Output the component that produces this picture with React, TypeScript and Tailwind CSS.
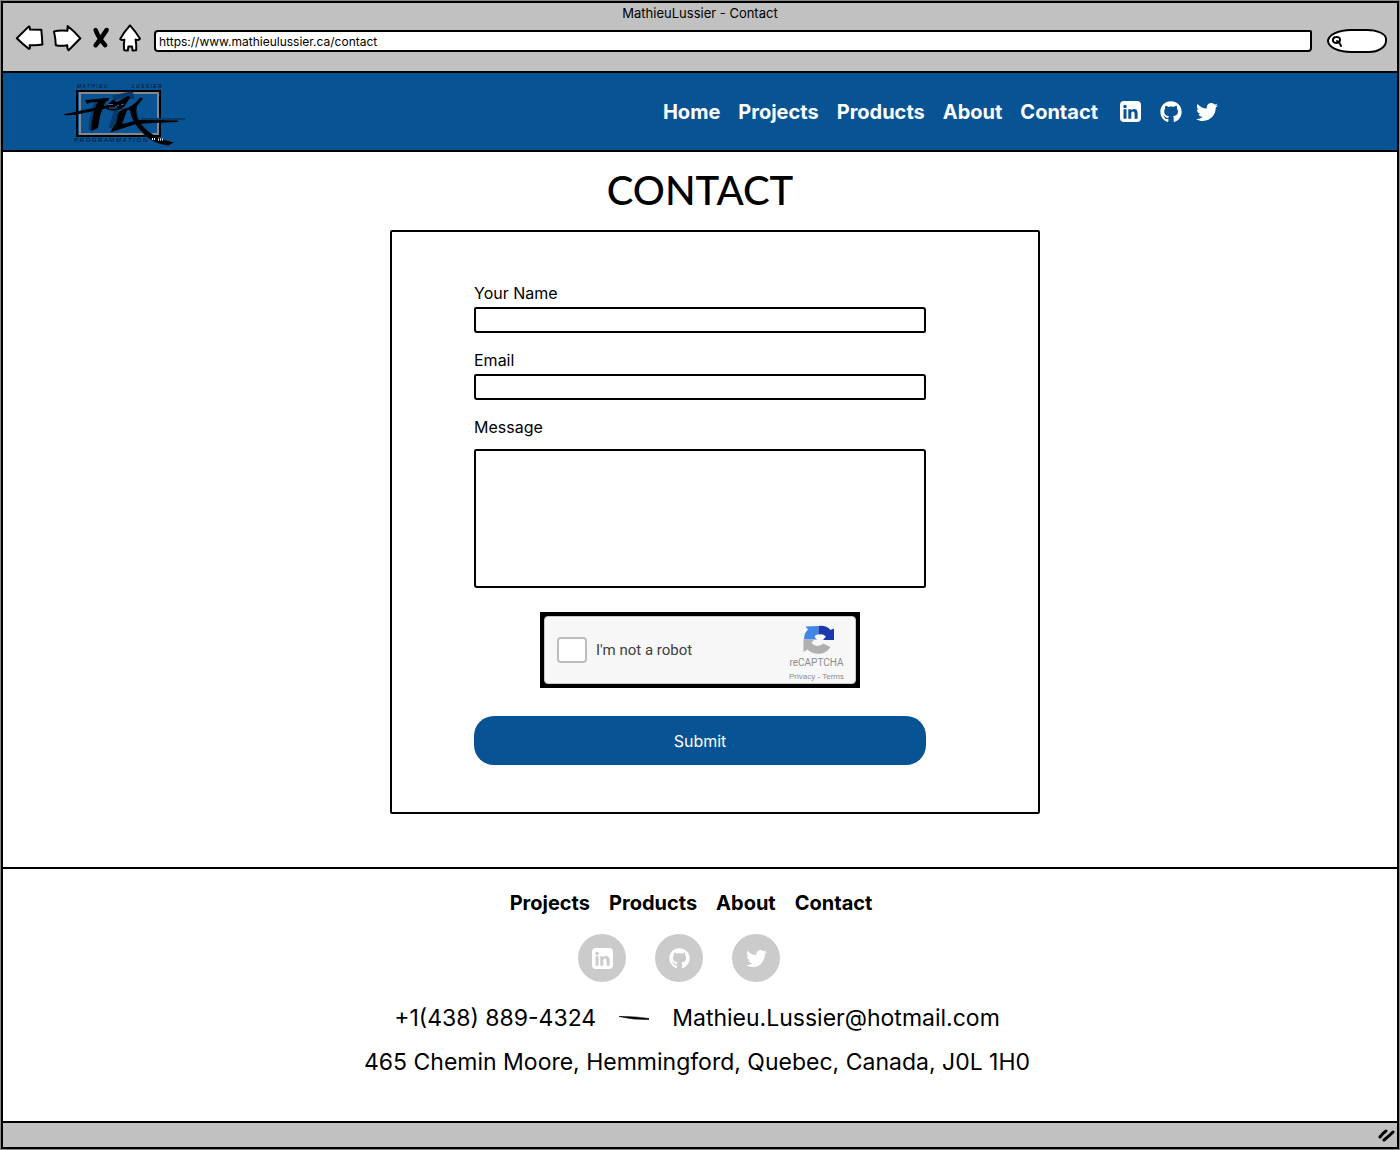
import type { ReactNode } from "react";
import { FaGithub, FaTwitter } from "react-icons/fa";

const sketch = {
  fill: "#fff",
  stroke: "#000",
  strokeWidth: 2,
  strokeLinejoin: "round" as const,
  strokeLinecap: "round" as const,
};

function BackIcon() {
  return (
    <svg width="30" height="28" viewBox="15 23 30 28" aria-hidden="true">
      <path {...sketch} d="M16.8 37.3 L28.6 25.6 Q30 24.8 29.8 28.6 L41.3 28.7 Q42 35 42.4 43.6 Q38 44.6 29.6 44.2 Q30.6 48.6 28.6 47.6 Q22 42.6 16.8 37.3Z" />
    </svg>
  );
}

function ForwardIcon() {
  return (
    <svg width="30" height="28" viewBox="52 23 30 28" aria-hidden="true">
      <path {...sketch} d="M54 30.4 Q60 28.8 67.4 29.8 L67.6 25 Q74 30 80.4 37.3 Q74 44 68.6 49.2 Q67 48 67.3 44.2 Q61 45.4 55.8 44.2 Q55.6 38 54 30.4Z" />
    </svg>
  );
}

function StopIcon() {
  return (
    <svg width="18" height="24" viewBox="93 24 18 24" aria-hidden="true">
      <path fill="none" stroke="#000" strokeWidth="4.500" strokeLinecap="round" d="M96.600 28 Q99.5 36 106.2 43.2 M107.6 28 Q102 37 96.600 43.2" />
    </svg>
  );
}

function HomeIcon() {
  return (
    <svg width="24" height="30" viewBox="118 22 24 30" aria-hidden="true">
      <path {...sketch} d="M130 24.4 Q136 31 140 37.8 Q139 39.6 135.6 38.6 Q136.6 44 136.2 49.2 L132.6 49.6 L132 45.4 L128.4 45.4 L127.8 49.6 L124.2 49.2 Q123.4 44 124.4 38.6 Q121 39.4 120.2 38 Q124 31 130 24.4Z" />
    </svg>
  );
}

function LinkedinIcon({ className }: { className: string }) {
  return (
    <svg className={className} viewBox="0 0 21 21" fill="currentColor" aria-hidden="true">
      <path
        fillRule="evenodd"
        d="M4 0h13a4 4 0 0 1 4 4v13a4 4 0 0 1-4 4H4a4 4 0 0 1-4-4V4a4 4 0 0 1 4-4ZM5 3.7a1.8 1.8 0 1 0 0 3.6 1.8 1.8 0 0 0 0-3.6ZM3.5 8.3v9.4h3V8.3ZM8.3 8.3v9.4h3v-4.9c0-1.4.5-2.3 1.7-2.3s1.6 1 1.6 2.4v4.8h3v-5.4c0-2.7-1.2-4.2-3.4-4.2-1.5 0-2.4.7-2.9 1.5V8.3Z"
      />
    </svg>
  );
}

function Logo() {
  return (
    <svg width="124" height="68" viewBox="62 79 124 68" role="img" aria-label="Mathieu Lussier Programmation">
      <g fill="#04121f" fontFamily="Liberation Sans, sans-serif" fontStyle="italic">
        <text x="76" y="87" fontSize="5">M A T H I E U</text>
        <text x="131" y="87" fontSize="5">L U S S I E R</text>
        <text x="73" y="141" fontSize="6">P R O G R A M M A T I O N</text>
      </g>
      <rect x="76" y="90" width="83" height="45" fill="none" stroke="#000" strokeWidth="2" />
      <rect x="79" y="92" width="78" height="41" fill="none" stroke="#85878b" strokeWidth="2" />
      <g fill="none" stroke="#063a69" strokeWidth="5" strokeLinejoin="round">
        <path d="M96 101 Q91 112 90 129" />
        <path d="M112 97 L130 93 L131 98" />
        <path d="M116 109 L110 127" />
        <path d="M133 110 Q136 126 151 137" />
        <path d="M140 118 L184 118" strokeWidth="2" />
      </g>
      <g fill="#000">
        <path d="M63 113 Q70 112 80 109.500 L113 103 L112 106 L83 112 Q72 115 63 114Z" />
        <path d="M84 99 Q95 98 108 97 L107 100 L89 101.500 L86 103Z" />
        <path d="M98 98 L107 97 Q99 109 97 127 L90 130 Q91 111 98 98Z" />
        <path d="M105 105 L112 98.500 L116 101 L127 95 L129.500 96 L123 106 Q116 111 108 109 Q104 108 105 105Z" />
        <path d="M119 110 L127 107 L121 123 L138 119 L151 119 L177 119.500 L177 121 L152 122 L135 123 L109 131.500 L115 122 L117 113Z" />
        <path d="M119 109 Q132 107 139 96.500 L142 97.500 L136 105 Q133 117 142 126 Q154 138 173 141.500 L167 144.500 Q153 143 143 133 Q130 121 129 109Z" />
      </g>
      <path d="M107 103.500 h5 M114 106 l4 -2 M120 104 l3 -1 M108 107 h8" stroke="#2d6da5" fill="none" />
      <path d="M151 138 h4 M157 138.500 h5" stroke="#fff" strokeWidth="2" strokeDasharray="1 1" fill="none" />
    </svg>
  );
}

function RecaptchaLogo() {
  return (
    <svg width="34" height="30" viewBox="0 0 34 30" aria-hidden="true">
      <path fill="#4285e8" d="M16.500 1 V9.500 Q13 9 12.500 12 L15 14.500 H2 Q2 8 6 4.500 L3.500 1.500Z" />
      <path fill="#1b38ac" d="M16.500 1 Q24 0 28.500 5 L32 3.500 V15 H21 L24 11.500 Q21 8.500 16.500 9.500Z" />
      <path fill="#b0b0b0" d="M1.500 14.500 H12 L9.500 18 Q13 22 17.500 20.500 Q20 20 21 18.500 L28.500 22 Q24 29 16 28.800 Q9 28.500 5.500 24.500 L1.500 27Z" />
    </svg>
  );
}

function Social({ label, className, children }: { label: string; className: string; children: ReactNode }) {
  return (
    <a href="#" aria-label={label} className={className}>
      {children}
    </a>
  );
}

const circle = "flex size-12 items-center justify-center rounded-full bg-[#cbcbcb] text-white";
const field = "block w-full rounded-[2px_3px_2px_3px] border-2 border-black bg-white px-2 outline-none";

export default function App() {
  return (
    <div className="min-h-screen bg-[#8a8a8a] p-px font-['Inter',sans-serif] text-black">
      <div className="flex min-h-[calc(100vh-2px)] flex-col border-2 border-black bg-white">
        <div className="border-b-2 border-black bg-[#c1c1c1] pb-[18px]">
          <p className="text-center text-[13px] leading-5">MathieuLussier - Contact</p>
          <div className="flex items-center pr-[10px] pl-3">
            <div className="flex items-center">
              <button type="button" aria-label="Back"><BackIcon /></button>
              <button type="button" aria-label="Forward" className="ml-[7px]"><ForwardIcon /></button>
              <button type="button" aria-label="Stop" className="ml-[10px]"><StopIcon /></button>
              <button type="button" aria-label="Home" className="ml-2"><HomeIcon /></button>
            </div>
            <input
              aria-label="Address"
              defaultValue="https://www.mathieulussier.ca/contact"
              className="mt-[6px] ml-3 h-[22px] min-w-0 flex-1 rounded-[4px_2px_4px_4px] border-2 border-black bg-white px-[3px] text-[12px] leading-4 outline-none"
            />
            <label className="mt-[6px] ml-[15px] flex h-6 w-[60px] items-center rounded-[24px_20px_18px_24px/12px_10px_12px_12px] border-2 border-black bg-white pl-[2px]">
              <svg width="12" height="12" viewBox="0 0 12 12" fill="none" stroke="#000" strokeWidth="2" aria-hidden="true">
                <path d="M5 2 Q9 1.500 9 5 Q8.500 8 5 8 Q1.500 7.500 2 4.500 Q2.500 2 5 2Z M6 6 Q9 8 10 11" strokeLinecap="round" />
              </svg>
              <input aria-label="Search" className="w-8 text-[12px] outline-none" />
            </label>
          </div>
        </div>

        <header className="flex min-h-[79px] flex-wrap items-center justify-between border-b-2 border-black bg-[#085394] pr-[179px] pl-[60px] text-white">
          <a href="#" aria-label="Mathieu Lussier" className="pt-1"><Logo /></a>
          <div className="flex items-center">
            <nav className="flex gap-[18px] text-[20px] leading-6 font-bold">
              <a href="#">Home</a>
              <a href="#">Projects</a>
              <a href="#">Products</a>
              <a href="#">About</a>
              <a href="#">Contact</a>
            </nav>
            <Social label="LinkedIn" className="ml-[22px]"><LinkedinIcon className="size-[21px]" /></Social>
            <Social label="GitHub" className="ml-[19px]"><FaGithub className="size-[22px]" /></Social>
            <Social label="Twitter" className="ml-[14px]"><FaTwitter className="size-[22px]" /></Social>
          </div>
        </header>

        <main className="flex flex-1 flex-col items-center pb-[53px]">
          <h1 className="pt-[14px] text-[40px] leading-12 font-medium font-['Lato',sans-serif]">CONTACT</h1>
          <div className="flex w-full justify-center pt-4 pl-[30px]">
            <form className="w-full max-w-[650px] rounded-xs border-2 border-black pt-[49px] pr-[112px] pb-[47px] pl-[82px]">
              <label htmlFor="name" className="mb-[2px] block text-[16px] leading-6">Your Name</label>
              <input id="name" className={`${field} h-[26px]`} />
              <label htmlFor="email" className="mt-[15px] mb-[2px] block text-[16px] leading-6">Email</label>
              <input id="email" type="email" className={`${field} h-[26px]`} />
              <label htmlFor="message" className="mt-[15px] block text-[16px] leading-6">Message</label>
              <textarea id="message" className={`${field} mt-[10px] h-[139px] resize-none`} />
              <div className="mx-auto mt-6 w-[320px] border-4 border-black bg-black">
                <div className="flex h-[68px] items-center justify-between rounded-sm border border-[#c9c9c9] bg-[#f7f7f7] pr-[11px] pl-3 font-['Roboto',sans-serif]">
                  <label className="flex items-center gap-[9px] text-[15px] leading-5 text-[#404040]">
                    <input type="checkbox" className="h-[26px] w-[30px] appearance-none rounded-sm border-2 border-[#bdbdbd] bg-white" />
                    I'm not a robot
                  </label>
                  <div className="flex flex-col items-center pt-[8px] text-[#8c8c8c]">
                    <div className="pl-1"><RecaptchaLogo /></div>
                    <span className="text-[10px] leading-4">reCAPTCHA</span>
                    <span className="font-['Liberation_Sans',sans-serif] text-[8px] leading-3">
                      <a href="#">Privacy</a> - <a href="#">Terms</a>
                    </span>
                  </div>
                </div>
              </div>
              <button type="submit" className="mt-7 block h-[49px] w-full rounded-[20px] bg-[#085394] text-[16px] leading-6 text-white">
                Submit
              </button>
            </form>
          </div>
        </main>

        <footer className="flex flex-col items-center border-t-2 border-black pt-[22px] pb-[45px]">
          <nav className="flex gap-[19px] pr-[18px] text-[20px] leading-6 font-bold">
            <a href="#">Projects</a>
            <a href="#">Products</a>
            <a href="#">About</a>
            <a href="#">Contact</a>
          </nav>
          <div className="mt-[19px] flex gap-[29px] pr-[42px]">
            <Social label="LinkedIn" className={circle}><LinkedinIcon className="size-[21px]" /></Social>
            <Social label="GitHub" className={circle}><FaGithub className="size-[21px]" /></Social>
            <Social label="Twitter" className={circle}><FaTwitter className="size-[21px]" /></Social>
          </div>
          <div className="mt-[22px] flex items-center gap-[23px] pr-[6px] text-[23px] leading-7">
            <span>+1(438) 889-4324</span>
            <svg width="30" height="6" viewBox="0 0 30 6" aria-hidden="true">
              <path d="M0 1.500 Q12 1 30 3.500 L30 4.500 Q14 5 0 1.500Z" stroke="#000" strokeWidth=".6" />
            </svg>
            <a href="#">Mathieu.Lussier@hotmail.com</a>
          </div>
          <p className="mt-4 pr-[6px] text-center text-[23px] leading-7">
            465 Chemin Moore, Hemmingford, Quebec, Canada, J0L 1H0
          </p>
        </footer>

        <div className="flex h-[26px] items-center justify-end border-t-2 border-black bg-[#c1c1c1] pr-[2px]">
          <svg width="18" height="14" viewBox="0 0 18 14" aria-hidden="true">
            <path d="M3 9 Q6 5 9 3 M7 12 Q11 9 16 4" fill="none" stroke="#000" strokeWidth="3" strokeLinecap="round" />
          </svg>
        </div>
      </div>
    </div>
  );
}
